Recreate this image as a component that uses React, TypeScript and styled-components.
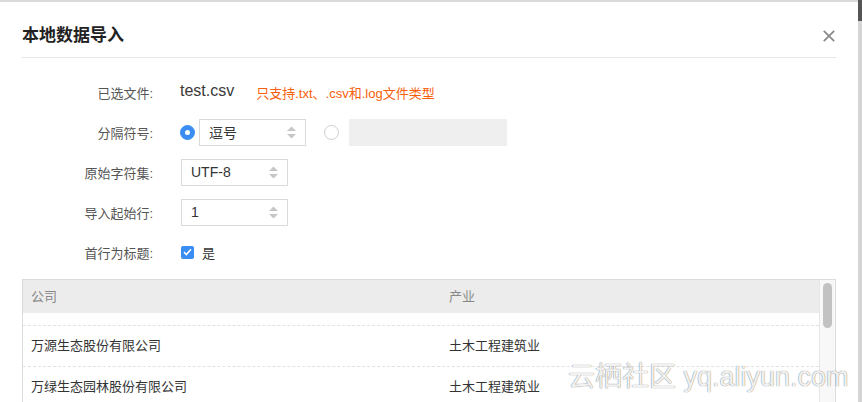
import React from "react";
import styled, { createGlobalStyle } from "styled-components";

const Global = createGlobalStyle`
  html, body { margin: 0; padding: 0; background: #fff; }
  body { font-family: "Liberation Sans", "Noto Sans CJK SC", sans-serif; }
  * { box-sizing: border-box; }
`;

const Page = styled.div`
  position: relative;
  width: 862px;
  height: 402px;
  overflow: hidden;
  display: flex;
  background: #fff;
`;

const Main = styled.div`
  flex: 1;
  border-top: 2px solid #dadada;
  padding: 0 22px;
  display: flex;
  flex-direction: column;
`;

const PageScroll = styled.div`
  width: 4px;
  background: #d5d5d5;
  display: flex;
  flex-direction: column;
`;

const PageThumb = styled.div`
  height: 21px;
  background: #555;
`;

const Header = styled.div`
  display: flex;
  align-items: center;
  justify-content: space-between;
  padding: 22px 0 9px;
  border-bottom: 1px solid #e7e7e7;
`;

const Title = styled.h1`
  margin: 0;
  font-size: 17px;
  line-height: 24px;
  font-weight: 600;
  color: #222;
`;

const CloseButton = styled.button`
  border: 0;
  background: none;
  padding: 0;
  margin-right: 1px;
  width: 12px;
  height: 12px;
  display: flex;
  cursor: pointer;
`;

const Form = styled.div`
  padding: 14px 0 7px;
  display: flex;
  flex-direction: column;
`;

const Row = styled.div`
  display: grid;
  grid-template-columns: 131px 1fr;
  column-gap: 27px;
  height: 40px;
  align-items: center;
`;

const Label = styled.div`
  text-align: right;
  font-size: 13px;
  color: #555;
`;

const Field = styled.div`
  display: flex;
  align-items: center;
`;

const FileName = styled.span`
  font-size: 16px;
  color: #3a3a3a;
  margin-top: -2px;
`;

const Note = styled.span`
  font-size: 13px;
  color: #f7600b;
  margin-left: 22px;
`;

const Radio = styled.span<{ $checked?: boolean; $gap?: number }>`
  width: 15px;
  height: 15px;
  border-radius: 50%;
  display: inline-flex;
  align-items: center;
  justify-content: center;
  margin-left: ${(p) => p.$gap ?? 0}px;
  background: ${(p) => (p.$checked ? "#3a8ef2" : "#fff")};
  border: 1px solid ${(p) => (p.$checked ? "#3a8ef2" : "#cfcfcf")};
  &::after {
    content: "";
    width: 5px;
    height: 5px;
    border-radius: 50%;
    background: ${(p) => (p.$checked ? "#fff" : "transparent")};
  }
`;

const SelectBox = styled.div<{ $offset?: number }>`
  width: 107px;
  height: 27px;
  border: 1px solid #dadada;
  background: #fff;
  display: flex;
  align-items: center;
  justify-content: space-between;
  padding: 0 9px 0 9px;
  margin-left: ${(p) => p.$offset ?? 0}px;
  font-size: 14px;
  color: #333;
`;

const GreyInput = styled.div`
  width: 158px;
  height: 27px;
  background: #efefef;
  margin-left: 10px;
`;

const Check = styled.span`
  width: 13px;
  height: 13px;
  border-radius: 2px;
  background: #3a8ef2;
  display: inline-flex;
  align-items: center;
  justify-content: center;
  margin-left: 1px;
`;

const CheckText = styled.span`
  font-size: 13px;
  color: #333;
  margin-left: 8px;
`;

const Table = styled.div`
  flex: 1;
  border: 1px solid #dcdcdc;
  border-bottom: 0;
  display: flex;
`;

const TableBody = styled.div`
  flex: 1;
  display: flex;
  flex-direction: column;
`;

const HeadRow = styled.div`
  display: grid;
  grid-template-columns: 418px 1fr;
  height: 33px;
  padding-bottom: 2px;
  align-items: center;
  background: #ececec;
  font-size: 13px;
  color: #888;
`;

const Spacer = styled.div`
  height: 12px;
`;

const DataRow = styled.div`
  display: grid;
  grid-template-columns: 418px 1fr;
  height: 41px;
  padding-bottom: 4px;
  align-items: center;
  border-top: 1px dashed #e2e2e2;
  font-size: 13px;
  color: #333;
`;

const Cell = styled.div`
  padding-left: 8px;
`;

const ScrollTrack = styled.div`
  width: 16px;
  border-left: 1px solid #e6e6e6;
  background: #f8f8f8;
  padding: 3px 3px 0 3px;
`;

const ScrollThumb = styled.div`
  width: 9px;
  height: 45px;
  border-radius: 5px;
  background: #c2c2c2;
`;

const Watermark = styled.div`
  position: absolute;
  left: 568px;
  top: 360px;
  font-size: 27px;
  line-height: 34px;
  color: rgba(255, 255, 255, 0.92);
  text-shadow: 0 0 1px rgba(0, 0, 0, 0.45), 0 0 1px rgba(0, 0, 0, 0.3);
  white-space: nowrap;
  pointer-events: none;
`;

const Arrows = () => (
  <svg width="9" height="13" viewBox="0 0 9 13">
    <polygon points="0,5 4.5,0.5 9,5" fill="#c6c6c6" />
    <polygon points="0,8 9,8 4.5,12.5" fill="#c6c6c6" />
  </svg>
);

const rows = [
  ["万源生态股份有限公司", "土木工程建筑业"],
  ["万绿生态园林股份有限公司", "土木工程建筑业"],
];

export default function App() {
  return (
    <Page>
      <Global />
      <Main>
        <Header>
          <Title>本地数据导入</Title>
          <CloseButton aria-label="关闭">
            <svg width="12" height="12" viewBox="0 0 12 12">
              <path d="M0.8 0.8 L11.2 11.2 M11.2 0.8 L0.8 11.2" stroke="#888" strokeWidth="1.7" />
            </svg>
          </CloseButton>
        </Header>
        <Form>
          <Row>
            <Label>已选文件:</Label>
            <Field>
              <FileName>test.csv</FileName>
              <Note>只支持.txt、.csv和.log文件类型</Note>
            </Field>
          </Row>
          <Row>
            <Label>分隔符号:</Label>
            <Field>
              <Radio $checked />
              <SelectBox $offset={4}>
                <span>逗号</span>
                <Arrows />
              </SelectBox>
              <Radio $gap={18} />
              <GreyInput />
            </Field>
          </Row>
          <Row>
            <Label>原始字符集:</Label>
            <Field>
              <SelectBox $offset={1}>
                <span>UTF-8</span>
                <Arrows />
              </SelectBox>
            </Field>
          </Row>
          <Row>
            <Label>导入起始行:</Label>
            <Field>
              <SelectBox $offset={1}>
                <span>1</span>
                <Arrows />
              </SelectBox>
            </Field>
          </Row>
          <Row>
            <Label>首行为标题:</Label>
            <Field>
              <Check>
                <svg width="9" height="8" viewBox="0 0 9 8">
                  <path d="M1 4.2 L3.4 6.5 L8 1.2" stroke="#fff" strokeWidth="1.6" fill="none" />
                </svg>
              </Check>
              <CheckText>是</CheckText>
            </Field>
          </Row>
        </Form>
        <Table>
          <TableBody>
            <HeadRow>
              <Cell>公司</Cell>
              <Cell>产业</Cell>
            </HeadRow>
            <Spacer />
            {rows.map((r, i) => (
              <DataRow key={i}>
                <Cell>{r[0]}</Cell>
                <Cell>{r[1]}</Cell>
              </DataRow>
            ))}
          </TableBody>
          <ScrollTrack>
            <ScrollThumb />
          </ScrollTrack>
        </Table>
      </Main>
      <PageScroll>
        <PageThumb />
      </PageScroll>
      <Watermark>云栖社区 yq.aliyun.com</Watermark>
    </Page>
  );
}
